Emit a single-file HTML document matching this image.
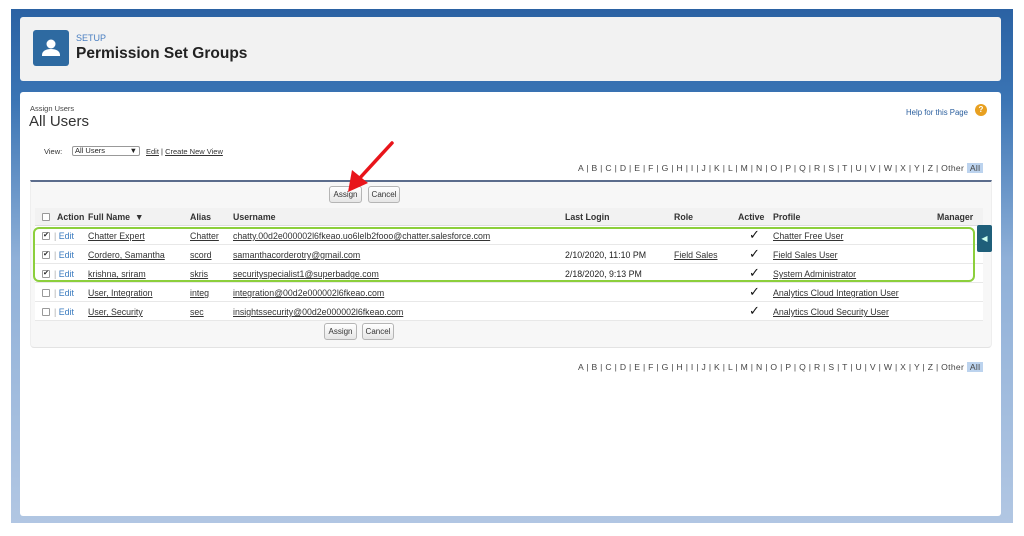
<!DOCTYPE html>
<html><head><meta charset="utf-8"><style>
*{margin:0;padding:0;box-sizing:border-box}
body{width:1024px;height:536px;background:#fff;position:relative;overflow:hidden;font-family:"Liberation Sans",sans-serif;color:#222}
.a{position:absolute}
.frame{left:11px;top:9px;width:1002px;height:514px;background:linear-gradient(#2b62a3 0,#3a74b4 90px,#8fb0d8 250px,#b2c7e3 520px)}
.hdr{left:20px;top:17px;width:981px;height:64px;background:#f2f2f2;border-radius:3px}
.main{left:20px;top:92px;width:981px;height:424px;background:#fff;border-radius:3px}
.icon{left:33px;top:30px;width:36px;height:36px;background:#2e6aa1;border-radius:3px}
.u{text-decoration:underline;color:#333}
.t{font-size:8.8px;white-space:nowrap}
.btn{height:17px;border:1px solid #b5b5b5;border-radius:3px;background:linear-gradient(#fff,#e6e6e6);font-size:8px;text-align:center;line-height:15px;color:#333}
.row{left:35px;width:948px;height:19px;border-bottom:1px solid #e8e8e8;background:#fff}
.cb{width:8px;height:8px;border:1px solid #999;background:#fff;border-radius:1px;font-size:7px;line-height:6px;text-align:center}
.chk{font-size:13px;color:#111}
.ed{color:#3a7bbf}
.alpha{font-size:8.6px;color:#444;white-space:nowrap;letter-spacing:.3px}
</style></head><body>
<div class="a frame"></div>
<div class="a hdr"></div>
<div class="a icon"><svg width="36" height="36"><circle cx="18" cy="14" r="4.5" fill="#fff"/><path d="M9 25c0-4 4-6 9-6s9 2 9 6v1H9z" fill="#fff"/></svg></div>
<div class="a" style="left:76px;top:33px;font-size:9px;color:#4a7fc1">SETUP</div>
<div class="a" style="left:76px;top:45px;font-size:15.5px;font-weight:bold;color:#222">Permission Set Groups</div>
<div class="a main"></div>
<div class="a" style="left:30px;top:104px;font-size:7.5px;color:#444">Assign Users</div>
<div class="a" style="left:29px;top:113px;font-size:15px;color:#333">All Users</div>
<div class="a" style="left:906px;top:108px;font-size:7.8px;color:#2b5f9e">Help for this Page</div>
<div class="a" style="left:975px;top:104px;width:12px;height:12px;border-radius:50%;background:#e8a020;color:#fff;font-size:8px;font-weight:bold;text-align:center;line-height:12px">?</div>
<div class="a t" style="left:44px;top:147px;color:#333;font-size:7.5px">View:</div>
<div class="a t" style="left:72px;top:146px;width:68px;height:10px;border:1px solid #999;border-radius:2px;line-height:8px;padding-left:2px;font-size:7.5px">All Users<span style="float:right;padding-right:2px">▼</span></div>
<div class="a t" style="left:146px;top:147px;font-size:7.5px"><span class="u">Edit</span> | <span class="u">Create New View</span></div>
<div class="a alpha" style="left:578px;top:163px">A | B | C | D | E | F | G | H | I | J | K | L | M | N | O | P | Q | R | S | T | U | V | W | X | Y | Z | Other <span style="background:#bcd3ee;padding:0 3px">All</span></div>
<div class="a" style="left:30px;top:180px;width:962px;height:168px;background:#f7f7f7;border-top:2px solid #5b6c8c;border-radius:0 0 4px 4px;border-left:1px solid #eee;border-right:1px solid #eee;border-bottom:1px solid #e3e3e3"></div>
<div class="a btn" style="left:329px;top:186px;width:33px">Assign</div>
<div class="a btn" style="left:368px;top:186px;width:32px">Cancel</div>
<div class="a" style="left:35px;top:208px;width:948px;height:18px;background:#f2f2f2;border-bottom:1px solid #ddd"></div>
<div class="a cb" style="left:42px;top:213px"></div>
<div class="a t" style="top:212px;left:57px;font-weight:bold;color:#333">Action</div>
<div class="a t" style="top:212px;left:88px;font-weight:bold;color:#333">Full Name &nbsp;▼</div>
<div class="a t" style="top:212px;left:190px;font-weight:bold;color:#333">Alias</div>
<div class="a t" style="top:212px;left:233px;font-weight:bold;color:#333">Username</div>
<div class="a t" style="top:212px;left:565px;font-weight:bold;color:#333">Last Login</div>
<div class="a t" style="top:212px;left:674px;font-weight:bold;color:#333">Role</div>
<div class="a t" style="top:212px;left:738px;font-weight:bold;color:#333">Active</div>
<div class="a t" style="top:212px;left:773px;font-weight:bold;color:#333">Profile</div>
<div class="a t" style="top:212px;left:937px;font-weight:bold;color:#333">Manager</div>

<div class="a row" style="top:226px"></div>
<div class="a row" style="top:245px"></div>
<div class="a row" style="top:264px"></div>
<div class="a row" style="top:283px"></div>
<div class="a row" style="top:302px"></div>

<div class="a cb" style="left:42px;top:232px">✔</div><div class="a t" style="left:54px;top:231px"><span style="color:#aaa">|</span> <span class="ed">Edit</span></div>
<div class="a t u" style="left:88px;top:231px">Chatter Expert</div><div class="a t u" style="left:190px;top:231px">Chatter</div><div class="a t u" style="left:233px;top:231px">chatty.00d2e000002l6fkeao.uo6lelb2fooo@chatter.salesforce.com</div><div class="a chk" style="left:749px;top:227px">✓</div><div class="a t u" style="left:773px;top:231px">Chatter Free User</div>

<div class="a cb" style="left:42px;top:251px">✔</div><div class="a t" style="left:54px;top:250px"><span style="color:#aaa">|</span> <span class="ed">Edit</span></div>
<div class="a t u" style="left:88px;top:250px">Cordero, Samantha</div><div class="a t u" style="left:190px;top:250px">scord</div><div class="a t u" style="left:233px;top:250px">samanthacorderotry@gmail.com</div><div class="a t" style="left:565px;top:250px">2/10/2020, 11:10 PM</div><div class="a t u" style="left:674px;top:250px">Field Sales</div><div class="a chk" style="left:749px;top:246px">✓</div><div class="a t u" style="left:773px;top:250px">Field Sales User</div>

<div class="a cb" style="left:42px;top:270px">✔</div><div class="a t" style="left:54px;top:269px"><span style="color:#aaa">|</span> <span class="ed">Edit</span></div>
<div class="a t u" style="left:88px;top:269px">krishna, sriram</div><div class="a t u" style="left:190px;top:269px">skris</div><div class="a t u" style="left:233px;top:269px">securityspecialist1@superbadge.com</div><div class="a t" style="left:565px;top:269px">2/18/2020, 9:13 PM</div><div class="a chk" style="left:749px;top:265px">✓</div><div class="a t u" style="left:773px;top:269px">System Administrator</div>

<div class="a cb" style="left:42px;top:289px"></div><div class="a t" style="left:54px;top:288px"><span style="color:#aaa">|</span> <span class="ed">Edit</span></div>
<div class="a t u" style="left:88px;top:288px">User, Integration</div><div class="a t u" style="left:190px;top:288px">integ</div><div class="a t u" style="left:233px;top:288px">integration@00d2e000002l6fkeao.com</div><div class="a chk" style="left:749px;top:284px">✓</div><div class="a t u" style="left:773px;top:288px">Analytics Cloud Integration User</div>

<div class="a cb" style="left:42px;top:308px"></div><div class="a t" style="left:54px;top:307px"><span style="color:#aaa">|</span> <span class="ed">Edit</span></div>
<div class="a t u" style="left:88px;top:307px">User, Security</div><div class="a t u" style="left:190px;top:307px">sec</div><div class="a t u" style="left:233px;top:307px">insightssecurity@00d2e000002l6fkeao.com</div><div class="a chk" style="left:749px;top:303px">✓</div><div class="a t u" style="left:773px;top:307px">Analytics Cloud Security User</div>

<div class="a btn" style="left:324px;top:323px;width:33px">Assign</div>
<div class="a btn" style="left:362px;top:323px;width:32px">Cancel</div>

<div class="a" style="left:33px;top:227px;width:942px;height:55px;border:2px solid #8ccf3c;border-radius:6px"></div>
<div class="a" style="left:977px;top:225px;width:15px;height:27px;background:#1f5f7a;border-radius:2px;color:#cfe;font-size:8px;line-height:27px;text-align:center">◀</div>

<div class="a alpha" style="left:578px;top:362px">A | B | C | D | E | F | G | H | I | J | K | L | M | N | O | P | Q | R | S | T | U | V | W | X | Y | Z | Other <span style="background:#bcd3ee;padding:0 3px">All</span></div>

<svg class="a" style="left:330px;top:135px" width="80" height="65"><line x1="62" y1="8" x2="28" y2="45" stroke="#e8141a" stroke-width="3.5" stroke-linecap="round"/><path d="M18 57 L22 35 L38 48 Z" fill="#e8141a"/></svg>
</body></html>
